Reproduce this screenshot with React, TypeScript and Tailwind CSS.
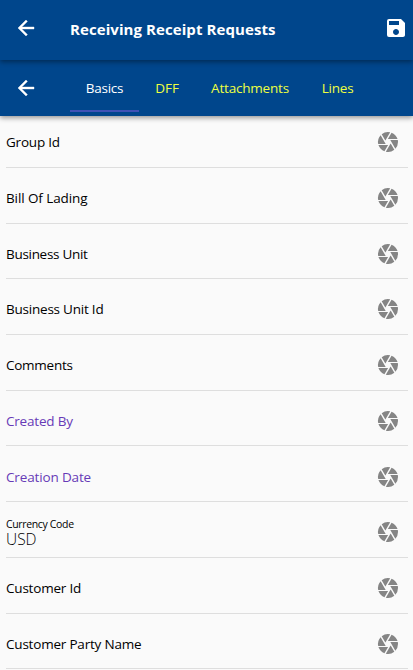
import { MdCamera, MdSave } from "react-icons/md";

type Field = { label: string; value?: string; tone: string; tracking: string };

const fields: Field[] = [
  { label: "Group Id", tone: "text-black", tracking: "tracking-[-0.2px]" },
  { label: "Bill Of Lading", tone: "text-black", tracking: "tracking-[-0.1px]" },
  { label: "Business Unit", tone: "text-black", tracking: "tracking-[-0.3px]" },
  { label: "Business Unit Id", tone: "text-black", tracking: "tracking-[-0.22px]" },
  { label: "Comments", tone: "text-black", tracking: "tracking-[-0.25px]" },
  { label: "Created By", tone: "text-[#673ab7]", tracking: "tracking-[-0.2px]" },
  { label: "Creation Date", tone: "text-[#673ab7]", tracking: "tracking-[-0.15px]" },
  { label: "Currency Code", value: "USD", tone: "text-black", tracking: "tracking-[-0.35px]" },
  { label: "Customer Id", tone: "text-black", tracking: "tracking-[-0.2px]" },
  { label: "Customer Party Name", tone: "text-black", tracking: "tracking-[-0.2px]" },
];

const tabs = [
  { name: "Basics", style: "w-[69px] text-white border-[#3f51b5] tracking-[-0.25px]" },
  { name: "DFF", style: "w-[56px] text-[#eeff41] border-transparent" },
  { name: "Attachments", style: "w-[110px] text-[#eeff41] border-transparent tracking-[-0.2px]" },
  { name: "Lines", style: "w-[65px] text-[#eeff41] border-transparent tracking-[-0.2px]" },
];

function BackArrow() {
  return (
    <svg viewBox="0 0 24 24" className="size-6 fill-white stroke-white stroke-[0.4]">
      <path d="M20 11H7.83l5.59-5.59L12 4l-8 8 8 8 1.41-1.41L7.83 13H20v-2z" />
    </svg>
  );
}

export default function App() {
  return (
    <div className="h-[670px] w-[413px] overflow-hidden bg-[#fafafa] font-['Open_Sans','Noto_Sans',sans-serif]">
      <header className="relative z-20 flex h-[60px] items-center bg-[#00468c] pr-[5px] pb-1 pl-[14px] text-white shadow-[0_2px_5px_rgba(0,0,0,0.4)]">
        <BackArrow />
        <h1 className="ml-8 flex-1 pt-[3px] text-[15px] font-bold tracking-[0.08px] whitespace-nowrap">
          Receiving Receipt Requests
        </h1>
        <MdSave size={24} />
      </header>
      <nav className="relative z-10 flex h-14 items-center bg-[#00468c] pl-[14px] text-white shadow-[0_2px_5px_rgba(0,0,0,0.4)]">
        <BackArrow />
        <div className="ml-8 flex">
          {tabs.map((t) => (
            <button
              key={t.name}
              className={`h-12 border-b-2 pt-[2px] text-center text-[13.5px] ${t.style}`}
            >
              {t.name}
            </button>
          ))}
        </div>
      </nav>
      <main>
        {fields.map((f) => (
          <div
            key={f.label}
            className="mr-[5px] ml-[6px] flex h-[55.7px] items-end border-b border-[#dedede] pb-[12.6px] first:h-[52px]"
          >
            <div className={`flex h-6 flex-1 flex-col justify-center whitespace-nowrap ${f.tone}`}>
              {f.value ? (
                <>
                  <span className={`text-[10.5px] leading-[14px] ${f.tracking}`}>{f.label}</span>
                  <span className="text-[15.5px] leading-4 font-light">{f.value}</span>
                </>
              ) : (
                <span className={`text-[13.5px] leading-6 ${f.tracking}`}>{f.label}</span>
              )}
            </div>
            <MdCamera size={24} className="mr-2 text-[#858585]" />
          </div>
        ))}
      </main>
    </div>
  );
}
